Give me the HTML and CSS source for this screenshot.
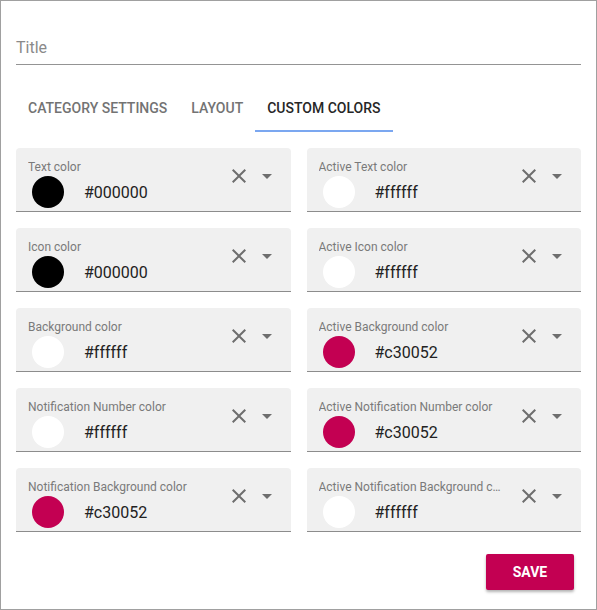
FILE: index.html
```html
<!DOCTYPE html>
<html>
<head>
<meta charset="utf-8">
<link rel="stylesheet" href="styles.css">
</head>
<body>
<div class="dialog">
  <div class="title-field">Title</div>
  <div class="tabs">
    <div class="tab">Category Settings</div>
    <div class="tab">Layout</div>
    <div class="tab active">Custom Colors</div>
  </div>
  <div class="grid">
    <div class="field"><div class="main"><div class="label">Text color</div><div class="value"><span class="swatch black"></span><span class="hex">#000000</span></div></div><div class="icons"><svg viewBox="0 0 24 24"><path d="M19 6.41L17.59 5 12 10.59 6.41 5 5 6.41 10.59 12 5 17.59 6.41 19 12 13.41 17.59 19 19 17.59 13.41 12z"/></svg><svg viewBox="0 0 24 24"><path d="M7 10l5 5 5-5z"/></svg></div></div>
    <div class="field"><div class="main"><div class="label">Active Text color</div><div class="value"><span class="swatch white"></span><span class="hex">#ffffff</span></div></div><div class="icons"><svg viewBox="0 0 24 24"><path d="M19 6.41L17.59 5 12 10.59 6.41 5 5 6.41 10.59 12 5 17.59 6.41 19 12 13.41 17.59 19 19 17.59 13.41 12z"/></svg><svg viewBox="0 0 24 24"><path d="M7 10l5 5 5-5z"/></svg></div></div>
    <div class="field"><div class="main"><div class="label">Icon color</div><div class="value"><span class="swatch black"></span><span class="hex">#000000</span></div></div><div class="icons"><svg viewBox="0 0 24 24"><path d="M19 6.41L17.59 5 12 10.59 6.41 5 5 6.41 10.59 12 5 17.59 6.41 19 12 13.41 17.59 19 19 17.59 13.41 12z"/></svg><svg viewBox="0 0 24 24"><path d="M7 10l5 5 5-5z"/></svg></div></div>
    <div class="field"><div class="main"><div class="label">Active Icon color</div><div class="value"><span class="swatch white"></span><span class="hex">#ffffff</span></div></div><div class="icons"><svg viewBox="0 0 24 24"><path d="M19 6.41L17.59 5 12 10.59 6.41 5 5 6.41 10.59 12 5 17.59 6.41 19 12 13.41 17.59 19 19 17.59 13.41 12z"/></svg><svg viewBox="0 0 24 24"><path d="M7 10l5 5 5-5z"/></svg></div></div>
    <div class="field"><div class="main"><div class="label">Background color</div><div class="value"><span class="swatch white"></span><span class="hex">#ffffff</span></div></div><div class="icons"><svg viewBox="0 0 24 24"><path d="M19 6.41L17.59 5 12 10.59 6.41 5 5 6.41 10.59 12 5 17.59 6.41 19 12 13.41 17.59 19 19 17.59 13.41 12z"/></svg><svg viewBox="0 0 24 24"><path d="M7 10l5 5 5-5z"/></svg></div></div>
    <div class="field"><div class="main"><div class="label">Active Background color</div><div class="value"><span class="swatch pink"></span><span class="hex">#c30052</span></div></div><div class="icons"><svg viewBox="0 0 24 24"><path d="M19 6.41L17.59 5 12 10.59 6.41 5 5 6.41 10.59 12 5 17.59 6.41 19 12 13.41 17.59 19 19 17.59 13.41 12z"/></svg><svg viewBox="0 0 24 24"><path d="M7 10l5 5 5-5z"/></svg></div></div>
    <div class="field"><div class="main"><div class="label">Notification Number color</div><div class="value"><span class="swatch white"></span><span class="hex">#ffffff</span></div></div><div class="icons"><svg viewBox="0 0 24 24"><path d="M19 6.41L17.59 5 12 10.59 6.41 5 5 6.41 10.59 12 5 17.59 6.41 19 12 13.41 17.59 19 19 17.59 13.41 12z"/></svg><svg viewBox="0 0 24 24"><path d="M7 10l5 5 5-5z"/></svg></div></div>
    <div class="field"><div class="main"><div class="label">Active Notification Number color</div><div class="value"><span class="swatch pink"></span><span class="hex">#c30052</span></div></div><div class="icons"><svg viewBox="0 0 24 24"><path d="M19 6.41L17.59 5 12 10.59 6.41 5 5 6.41 10.59 12 5 17.59 6.41 19 12 13.41 17.59 19 19 17.59 13.41 12z"/></svg><svg viewBox="0 0 24 24"><path d="M7 10l5 5 5-5z"/></svg></div></div>
    <div class="field"><div class="main"><div class="label">Notification Background color</div><div class="value"><span class="swatch pink"></span><span class="hex">#c30052</span></div></div><div class="icons"><svg viewBox="0 0 24 24"><path d="M19 6.41L17.59 5 12 10.59 6.41 5 5 6.41 10.59 12 5 17.59 6.41 19 12 13.41 17.59 19 19 17.59 13.41 12z"/></svg><svg viewBox="0 0 24 24"><path d="M7 10l5 5 5-5z"/></svg></div></div>
    <div class="field"><div class="main"><div class="label">Active Notification Background color</div><div class="value"><span class="swatch white"></span><span class="hex">#ffffff</span></div></div><div class="icons"><svg viewBox="0 0 24 24"><path d="M19 6.41L17.59 5 12 10.59 6.41 5 5 6.41 10.59 12 5 17.59 6.41 19 12 13.41 17.59 19 19 17.59 13.41 12z"/></svg><svg viewBox="0 0 24 24"><path d="M7 10l5 5 5-5z"/></svg></div></div>
  </div>
  <div class="footer"><button class="save">Save</button></div>
</div>
</body>
</html>
```
FILE: styles.css
```css
* { box-sizing: border-box; }
html, body { margin: 0; padding: 0; background: #fff; }
body { font-family: Roboto, "Noto Sans", sans-serif; }
.dialog {
  width: 597px;
  height: 610px;
  border: 1px solid #a0a0a0;
  padding: 15px 15px 0 15px;
}
.title-field {
  padding: 22px 0 7px;
  font-size: 16px;
  line-height: 19px;
  color: #8a8a8a;
  border-bottom: 1px solid #949494;
}
.tabs {
  display: flex;
  margin-top: 19px;
  height: 48px;
}
.tab {
  padding: 0 12px;
  display: flex;
  align-items: center;
  font-size: 14px;
  font-weight: 500;
  text-transform: uppercase;
  color: #737373;
  border-bottom: 2px solid transparent;
  padding-top: 2px;
}
.tab.active {
  color: #262626;
  border-bottom-color: #7ba7f0;
}
.grid {
  margin-top: 16px;
  display: grid;
  grid-template-columns: 1fr 1fr;
  gap: 16px;
}
.field {
  height: 64px;
  background: #f0f0f0;
  border-radius: 4px 4px 0 0;
  border-bottom: 1px solid #8c8c8c;
  display: flex;
  padding: 12px 12px 0 12px;
  min-width: 0;
}
.main { flex: 1; min-width: 0; margin-right: 14px; }
.label {
  font-size: 12px;
  line-height: 14px;
  color: #7a7a7a;
  white-space: nowrap;
  overflow: hidden;
  text-overflow: ellipsis;
}
.value {
  display: flex;
  align-items: center;
  margin-top: 2px;
  height: 32px;
}
.swatch {
  width: 32px;
  height: 32px;
  border-radius: 50%;
  margin-left: 4px;
  flex: none;
}
.swatch.black { background: #000; }
.swatch.white { background: #fff; }
.swatch.pink { background: #c30052; }
.hex {
  margin-left: 20px;
  font-size: 16px;
  color: #222;
  padding-top: 1px;
}
.icons {
  display: flex;
  gap: 4px;
  margin-top: 4px;
  align-self: flex-start;
}
.icons svg { width: 24px; height: 24px; fill: #6e6e6e; display: block; }
.footer {
  display: flex;
  justify-content: flex-end;
  margin-top: 22px;
  padding-right: 7px;
}
.save {
  width: 88px;
  height: 36px;
  border: none;
  border-radius: 2px;
  background: #c30052;
  color: #fff;
  font-family: Roboto, sans-serif;
  font-size: 14px;
  font-weight: 700;
  text-transform: uppercase;
  box-shadow: 0 2px 3px rgba(0,0,0,0.3);
}
```
